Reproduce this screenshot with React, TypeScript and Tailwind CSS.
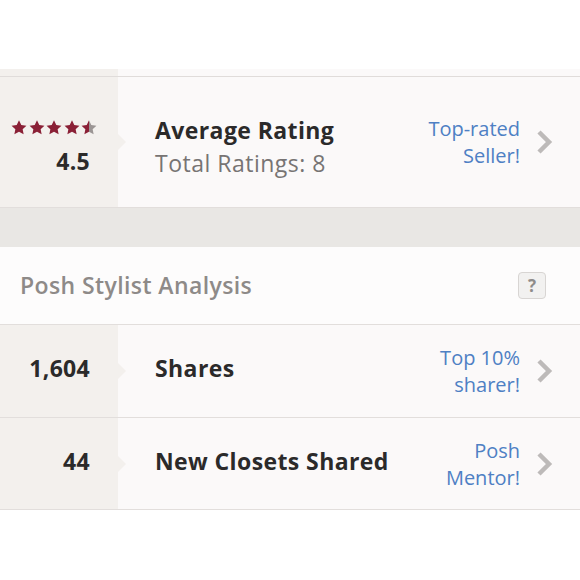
import React from 'react';

const FONT = { fontFamily: '"Open Sans", "Liberation Sans", sans-serif' };

const Star = ({ half }: { half?: boolean }) => (
  <svg width="16" height="15" viewBox="0 0 24 23">
    <defs>
      <linearGradient id="halfStar">
        <stop offset="50%" stopColor="#8a2036" />
        <stop offset="50%" stopColor="#9b9594" />
      </linearGradient>
    </defs>
    <path
      d="M12 0.5l3.5 7.2 7.9 1-5.8 5.5 1.5 7.8L12 18.2l-7.1 3.8 1.5-7.8L0.6 8.7l7.9-1z"
      fill={half ? 'url(#halfStar)' : '#8a2036'}
    />
  </svg>
);

const Chevron = () => (
  <svg width="18" height="26" viewBox="0 0 18 26" className="shrink-0">
    <path d="M3 3l10 10-10 10" fill="none" stroke="#bdbab9" strokeWidth="4.5" />
  </svg>
);

// 左侧数值列 + 右侧内容
const StatRow = ({
  left,
  title,
  sub,
  badge,
  height,
}: {
  left: React.ReactNode;
  title: string;
  sub?: string;
  badge: [string, string];
  height: string;
}) => (
  <div className={`flex ${height} border-b border-[#e2dedc]`}>
    <div
      className={`relative w-[118px] shrink-0 bg-[#f3f0ed] flex flex-col items-end justify-center pr-[28px] ${
        sub ? 'pt-[10px]' : 'pb-[5px]'
      }`}
    >
      {left}
      <div className="absolute right-[-8px] top-1/2 -translate-y-1/2 w-0 h-0 border-y-[8px] border-y-transparent border-l-[8px] border-l-[#f3f0ed]" />
    </div>
    <div className="flex-1 bg-[#fbf9f9] flex items-center pl-[37px] pr-[26px]">
      <div className={`flex-1 ${sub ? 'pt-[9px]' : 'pb-[5px]'}`}>
        <div className="text-[23px] font-bold text-[#2b2a2a] leading-[33px] tracking-[0.4px]">{title}</div>
        {sub && <div className="text-[23px] text-[#777473] leading-[33px] tracking-[0.5px]">{sub}</div>}
      </div>
      <div className="text-right text-[20px] text-[#4e80c4] leading-[27px] mr-[16px]">
        <div>{badge[0]}</div>
        <div>{badge[1]}</div>
      </div>
      <Chevron />
    </div>
  </div>
);

export default function App() {
  return (
    <div className="w-[580px] h-[580px] bg-white overflow-hidden" style={FONT}>
      <div className="h-[69px]" />
      <div className="flex h-[7px]">
        <div className="w-[118px] bg-[#f3f0ed]" />
        <div className="flex-1 bg-[#fbf9f9]" />
      </div>
      <div className="border-t border-[#e0dcda]" />

      <StatRow
        height="h-[131px]"
        left={
          <>
            <div className="flex gap-[1.5px] mr-[-7px] mb-[12px]">
              <Star />
              <Star />
              <Star />
              <Star />
              <Star half />
            </div>
            <div className="text-[23px] font-bold text-[#2b2a2a] leading-[28px] tracking-[0.3px]">4.5</div>
          </>
        }
        title="Average Rating"
        sub="Total Ratings: 8"
        badge={['Top-rated', 'Seller!']}
      />

      <div className="h-[39px] bg-[#e9e7e4]" />

      <div className="h-[78px] bg-[#fdfcfc] border-b border-[#e2dedc] flex items-center justify-between pl-[20px] pr-[34px]">
        <div className="text-[23px] text-[#8e8a88] font-semibold tracking-[0.4px]">Posh Stylist Analysis</div>
        <div className="w-[28px] h-[27px] rounded-[4px] border border-[#d8d5d3] bg-[#f2f1f0] flex items-center justify-center text-[17px] font-bold text-[#8f8c8a]">
          ?
        </div>
      </div>

      <StatRow
        height="h-[93px]"
        left={<div className="text-[23px] font-bold text-[#2b2a2a] tracking-[0.3px]">1,604</div>}
        title="Shares"
        badge={['Top 10%', 'sharer!']}
      />
      <StatRow
        height="h-[92px]"
        left={<div className="text-[23px] font-bold text-[#2b2a2a] tracking-[0.3px]">44</div>}
        title="New Closets Shared"
        badge={['Posh', 'Mentor!']}
      />
    </div>
  );
}
